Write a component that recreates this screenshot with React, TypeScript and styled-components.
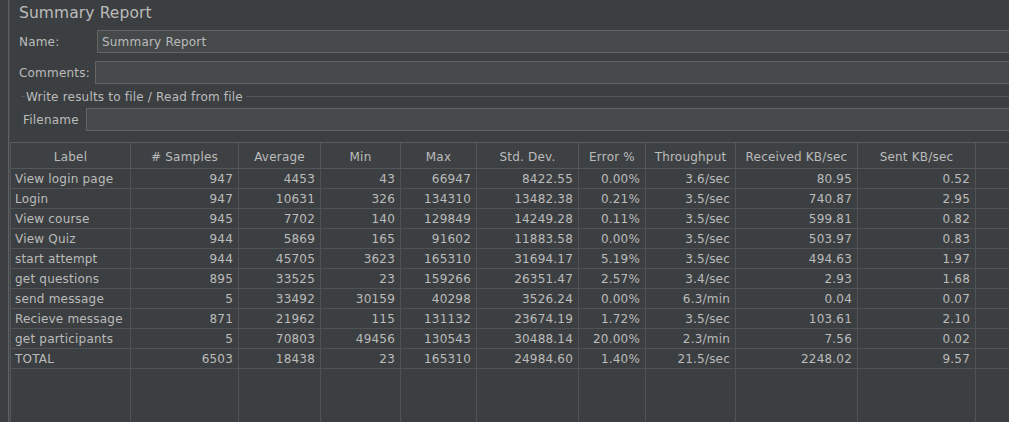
import * as React from 'react'
import styled, { createGlobalStyle } from 'styled-components'

const GlobalStyle = createGlobalStyle`
  html, body {
    margin: 0;
    padding: 0;
    background: #3c3f41;
  }
  body {
    font-family: "DejaVu Sans", "Liberation Sans", sans-serif;
    font-size: 12px;
    letter-spacing: 0.2px;
    color: #bbbbbb;
  }
`

const Screen = styled.div`
  width: 1009px;
  height: 422px;
  overflow: hidden;
  display: flex;
  background: #3c3f41;
`

const SideStrip = styled.div`
  width: 8px;
  flex: none;
  background: #3c3f41;
`

const SplitDivider = styled.div`
  width: 1px;
  flex: none;
  background: #5e6163;
  border-right: 1px solid #46494b;
`

const Main = styled.div`
  width: 1120px;
  flex: none;
  display: flex;
  flex-direction: column;
`

const Title = styled.div`
  height: 24px;
  line-height: 24px;
  padding: 1px 0 0 9px;
  font-size: 15.5px;
  letter-spacing: 0.1px;
  color: #bbbbbb;
  white-space: nowrap;
`

const FieldRow = styled.div<{ $top: number; $indent: number }>`
  display: flex;
  align-items: center;
  margin-top: ${p => p.$top}px;
  padding-left: ${p => p.$indent}px;
`

const FieldLabel = styled.label<{ $width: number }>`
  width: ${p => p.$width}px;
  flex: none;
  white-space: nowrap;
`

const TextField = styled.div`
  flex: 1;
  height: 23px;
  box-sizing: border-box;
  border: 1px solid #646464;
  background: #45494a;
  padding-left: 4px;
  display: flex;
  align-items: center;
  white-space: nowrap;
`

const GroupHeader = styled.div`
  display: flex;
  align-items: center;
  height: 13px;
  margin-top: 6px;
  padding-left: 11px;
  white-space: nowrap;
`

const GroupLine = styled.div<{ $grow?: boolean }>`
  height: 1px;
  background: #55585a;
  width: 4px;
  flex: ${p => (p.$grow ? 1 : 'none')};
  margin: ${p => (p.$grow ? '0 0 0 3px' : '0 1px 0 0')};
`

const Table = styled.div`
  margin-top: 11px;
  flex: 1;
  display: grid;
  grid-template-columns: 120px 108px 82px 80px 76px 102px 67px 90px 122px 118px 80px;
  grid-template-rows: 26px repeat(10, 20px) 1fr;
  border-top: 1px solid #585c5e;
  border-left: 1px solid #515557;
  align-self: flex-start;
  width: max-content;
  min-height: 300px;
`

const HeadCell = styled.div`
  box-sizing: border-box;
  border-right: 1px solid #535759;
  border-bottom: 1px solid #535759;
  background: #3e4143;
  display: flex;
  align-items: center;
  justify-content: center;
  white-space: nowrap;
  padding-top: 2px;
`

const Cell = styled.div<{ $align: 'left' | 'right' }>`
  box-sizing: border-box;
  border-right: 1px solid #4f5355;
  border-bottom: 1px solid #4f5355;
  display: flex;
  align-items: center;
  justify-content: ${p => (p.$align === 'left' ? 'flex-start' : 'flex-end')};
  padding: 0 5px 0 4px;
  white-space: nowrap;
`

const FillCell = styled.div`
  box-sizing: border-box;
  border-right: 1px solid #4f5355;
`

const columns = [
  'Label', '# Samples', 'Average', 'Min', 'Max', 'Std. Dev.',
  'Error %', 'Throughput', 'Received KB/sec', 'Sent KB/sec', '',
]

const rows: string[][] = [
  ['View login page', '947', '4453', '43', '66947', '8422.55', '0.00%', '3.6/sec', '80.95', '0.52'],
  ['Login', '947', '10631', '326', '134310', '13482.38', '0.21%', '3.5/sec', '740.87', '2.95'],
  ['View course', '945', '7702', '140', '129849', '14249.28', '0.11%', '3.5/sec', '599.81', '0.82'],
  ['View Quiz', '944', '5869', '165', '91602', '11883.58', '0.00%', '3.5/sec', '503.97', '0.83'],
  ['start attempt', '944', '45705', '3623', '165310', '31694.17', '5.19%', '3.5/sec', '494.63', '1.97'],
  ['get questions', '895', '33525', '23', '159266', '26351.47', '2.57%', '3.4/sec', '2.93', '1.68'],
  ['send message', '5', '33492', '30159', '40298', '3526.24', '0.00%', '6.3/min', '0.04', '0.07'],
  ['Recieve message', '871', '21962', '115', '131132', '23674.19', '1.72%', '3.5/sec', '103.61', '2.10'],
  ['get participants', '5', '70803', '49456', '130543', '30488.14', '20.00%', '2.3/min', '7.56', '0.02'],
  ['TOTAL', '6503', '18438', '23', '165310', '24984.60', '1.40%', '21.5/sec', '2248.02', '9.57'],
]

export default function App() {
  return (
    <>
      <GlobalStyle />
      <Screen>
        <SideStrip />
        <SplitDivider />
        <Main>
          <Title>Summary Report</Title>

          <FieldRow $top={5} $indent={9}>
            <FieldLabel $width={78}>Name:</FieldLabel>
            <TextField>Summary Report</TextField>
          </FieldRow>

          <FieldRow $top={8} $indent={9}>
            <FieldLabel $width={76}>Comments:</FieldLabel>
            <TextField />
          </FieldRow>

          <GroupHeader>
            <GroupLine />
            Write results to file / Read from file
            <GroupLine $grow />
          </GroupHeader>

          <FieldRow $top={5} $indent={13}>
            <FieldLabel $width={63}>Filename</FieldLabel>
            <TextField />
          </FieldRow>

          <Table>
            {columns.map((c, i) => (
              <HeadCell key={'h' + i}>{c}</HeadCell>
            ))}
            {rows.map((r, ri) => (
              <React.Fragment key={ri}>
                {r.map((v, ci) => (
                  <Cell key={ci} $align={ci === 0 ? 'left' : 'right'}>{v}</Cell>
                ))}
                <Cell $align="right" />
              </React.Fragment>
            ))}
            {columns.map((_, i) => (
              <FillCell key={'f' + i} />
            ))}
          </Table>
        </Main>
      </Screen>
    </>
  )
}
